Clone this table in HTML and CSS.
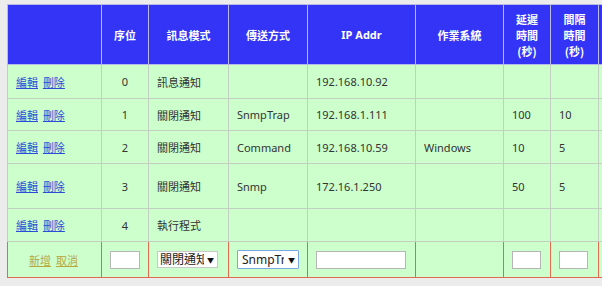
FILE: index.html
```html
<!DOCTYPE html>
<html lang="zh-Hant">
<head>
<meta charset="utf-8">
<title>訊息設定</title>
<link rel="stylesheet" href="styles.css">
</head>
<body>
<table class="grid">
  <colgroup>
    <col class="c-act"><col class="c-seq"><col class="c-mode"><col class="c-send"><col class="c-ip"><col class="c-os"><col class="c-delay"><col class="c-int"><col class="c-more">
  </colgroup>
  <thead>
    <tr class="head">
      <th></th>
      <th>序位</th>
      <th>訊息模式</th>
      <th>傳送方式</th>
      <th class="latin">IP Addr</th>
      <th>作業系統</th>
      <th>延遲<br>時間<br>(秒)</th>
      <th>間隔<br>時間<br>(秒)</th>
      <th></th>
    </tr>
  </thead>
  <tbody>
    <tr class="r0">
      <td class="act"><a href="#">編輯</a> <a href="#">刪除</a></td>
      <td class="num">0</td>
      <td>訊息通知</td>
      <td></td>
      <td>192.168.10.92</td>
      <td></td>
      <td></td>
      <td></td>
      <td></td>
    </tr>
    <tr class="r1">
      <td class="act"><a href="#">編輯</a> <a href="#">刪除</a></td>
      <td class="num">1</td>
      <td>關閉通知</td>
      <td>SnmpTrap</td>
      <td>192.168.1.111</td>
      <td></td>
      <td>100</td>
      <td>10</td>
      <td></td>
    </tr>
    <tr class="r2">
      <td class="act"><a href="#">編輯</a> <a href="#">刪除</a></td>
      <td class="num">2</td>
      <td>關閉通知</td>
      <td>Command</td>
      <td>192.168.10.59</td>
      <td>Windows</td>
      <td>10</td>
      <td>5</td>
      <td></td>
    </tr>
    <tr class="r3">
      <td class="act"><a href="#">編輯</a> <a href="#">刪除</a></td>
      <td class="num">3</td>
      <td>關閉通知</td>
      <td>Snmp</td>
      <td>172.16.1.250</td>
      <td></td>
      <td>50</td>
      <td>5</td>
      <td></td>
    </tr>
    <tr class="r4">
      <td class="act"><a href="#">編輯</a> <a href="#">刪除</a></td>
      <td class="num">4</td>
      <td>執行程式</td>
      <td></td>
      <td></td>
      <td></td>
      <td></td>
      <td></td>
      <td></td>
    </tr>
    <tr class="new">
      <td class="act add"><a href="#">新增</a> <a href="#">取消</a></td>
      <td class="num"><input class="box seq" type="text"></td>
      <td><span class="sel"><select class="s-mode"><option>關閉通知</option></select></span></td>
      <td><span class="sel focus"><select class="s-send"><option>SnmpTrap</option></select></span></td>
      <td><input class="box ip" type="text"></td>
      <td></td>
      <td><input class="box small" type="text"></td>
      <td><input class="box small" type="text"></td>
      <td></td>
    </tr>
  </tbody>
</table>
</body>
</html>
```

FILE: styles.css
```css
html, body {
  margin: 0;
  background: #ececec;
  overflow: hidden;
}
body {
  padding: 4px 0 0 7px;
  font-family: "Noto Sans", "Noto Sans CJK TC", sans-serif;
  font-size: 11px;
  color: #333;
}
.grid {
  border-collapse: collapse;
  table-layout: fixed;
  width: 595px;
}
.c-act { width: 94px; }
.c-seq { width: 47px; }
.c-mode { width: 80px; }
.c-send { width: 79px; }
.c-ip { width: 108px; }
.c-os { width: 88px; }
.c-delay { width: 47px; }
.c-int { width: 48px; }
.c-more { width: 4px; }

.grid th, .grid td {
  border: 1px solid #c3cfc3;
  padding: 0 0 0 8px;
  text-align: left;
  vertical-align: middle;
  white-space: nowrap;
  overflow: hidden;
}
.grid th:last-child, .grid td:last-child {
  padding: 0;
}
.head th {
  background: #3434f6;
  color: #fff;
  font-weight: bold;
  text-align: center;
  padding: 0;
  height: 59px;
  line-height: 16px;
  border-color: #b9b9e6;
  font-family: "Noto Sans CJK TC", sans-serif;
}
.head th.latin {
  font-family: "Noto Sans", sans-serif;
}
.grid td {
  background: #ccffcc;
}
.r0 td { height: 33px; }
.r1 td { height: 31px; }
.r2 td { height: 32px; }
.r3 td { height: 44px; }
.r4 td { height: 32px; }
.new td { height: 35px; border-color: #e06a50; }

.grid td.num {
  text-align: center;
  padding: 0;
}
.act a {
  color: #2a4cd8;
  text-decoration: underline;
  margin-right: 2px;
}
.grid td.add {
  text-align: center;
  padding: 0;
}
.add a {
  color: #b8a640;
}
.box {
  display: block;
  box-sizing: border-box;
  height: 18px;
  border: 1px solid #b5b5b5;
  background: #fff;
  padding: 0;
  margin: 0;
}
.box.seq { width: 30px; margin: 0 auto; }
.box.ip { width: 90px; }
.box.small { width: 29px; }

.sel {
  position: relative;
  display: inline-block;
  vertical-align: middle;
}
.sel select {
  appearance: none;
  -webkit-appearance: none;
  box-sizing: border-box;
  background: #fff;
  border: 1px solid #c8c8c8;
  border-radius: 0;
  color: #222;
  font-family: "Noto Sans", "Noto Sans CJK TC", sans-serif;
  margin: 0;
  outline: none;
}
.s-mode {
  width: 61px;
  height: 17px;
  font-size: 12px;
  padding: 0 13px 0 2px;
  line-height: 15px;
}
.sel.focus select {
  border: 1px solid #7aa7e6;
  border-radius: 1px;
  width: 62px;
  height: 19px;
  font-size: 12px;
  padding: 0 14px 0 4px;
}
.sel::after {
  content: "▼";
  position: absolute;
  right: 4px;
  top: 50%;
  transform: translateY(-50%);
  font-size: 7px;
  color: #111;
  pointer-events: none;
}
```
